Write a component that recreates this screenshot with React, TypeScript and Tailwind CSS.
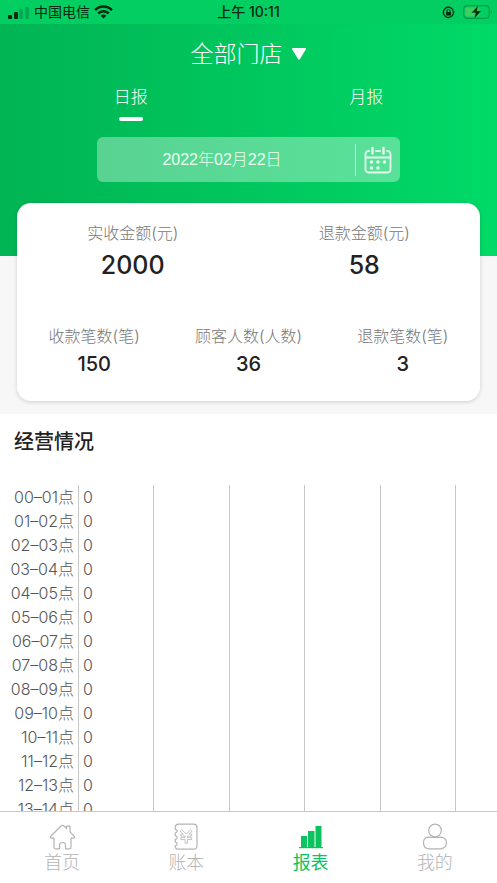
import type { ReactNode } from "react";

const hours = Array.from({ length: 14 }, (_, h) => {
  const pad = (n: number) => String(n).padStart(2, "0");
  return { label: `${pad(h)}–${pad(h + 1)}点`, value: 0 };
});

function StatusBar() {
  return (
    <div className="grid h-6 grid-cols-3 items-center bg-[#03ce62] px-2 text-sm text-[#04290f]">
      <div className="flex items-center gap-1">
        <svg width="22" height="13" viewBox="0 0 22 13" aria-hidden="true">
          <rect x="0" y="9" width="4" height="4" rx="1" fill="#04290f" />
          <rect x="6" y="6" width="4" height="7" rx="1" fill="#04290f" />
          <rect x="11" y="3" width="4" height="10" rx="1" fill="#03ab52" />
          <rect x="17" y="1" width="4" height="12" rx="1" fill="#03ab52" />
        </svg>
        <span className="whitespace-nowrap">中国电信</span>
        <svg width="19" height="14" viewBox="0 0 19 14" fill="none" stroke="#04290f" strokeWidth="2.5" aria-hidden="true">
          <path d="M1 5.2C5.8.4 13.2.4 18 5.2" />
          <path d="M4.2 8.4c3-3 7.6-3 10.6 0" />
          <path d="M9.5 13.4 6.7 10.7c1.6-1.5 4-1.5 5.6 0z" fill="#04290f" stroke="none" />
        </svg>
      </div>
      <span className="text-center font-medium">上午 10:11</span>
      <div className="flex items-center justify-end gap-1">
        <svg width="13" height="13" viewBox="0 0 13 13" fill="none" stroke="#04290f" aria-hidden="true">
          <path d="M11.4 7.4A5.1 5.1 0 1 1 11.2 4.6" strokeWidth="1.3" />
          <path d="M10 5.6h3l-1.5 2.2z" fill="#04290f" stroke="none" />
          <rect x="4" y="6" width="5" height="3.5" rx=".5" fill="#04290f" stroke="none" />
          <path d="M5 6V4.9a1.5 1.5 0 0 1 3 0V6" />
        </svg>
        <svg className="-mr-1 ml-1" width="30" height="14" viewBox="0 0 30 14" aria-hidden="true">
          <rect x=".7" y=".7" width="25.6" height="12.6" rx="3.5" fill="none" stroke="#049a4b" strokeWidth="1.2" />
          <rect x="2.4" y="2.4" width="14" height="9.2" rx="2" fill="#3fcf60" />
          <path d="M28 5v4c1.4-.6 1.4-3.4 0-4z" fill="#049a4b" />
          <path d="M15.5 0 8.5 7.8h4.2L11 14l7.2-8h-4.4z" fill="#04290f" stroke="#03ce62" strokeWidth=".4" />
        </svg>
      </div>
    </div>
  );
}

function CalendarIcon() {
  return (
    <svg width="28" height="28" viewBox="0 0 28 28" fill="none" stroke="#e4faed" strokeWidth="1.8" strokeLinecap="round" aria-hidden="true">
      <path d="M5 5H4.500a3 3 0 0 0-3 3v15.500a3 3 0 0 0 3 3h19a3 3 0 0 0 3-3V8a3 3 0 0 0-3-3H23M12 5h4M1.500 11.500h25" />
      <path d="M8.500 2v5.500M19.500 2v5.500" strokeWidth="2.400" />
      <g fill="#e4faed" stroke="none">
        <circle cx="7.500" cy="16" r="1.800" />
        <circle cx="14" cy="16" r="1.800" />
        <circle cx="20.500" cy="16" r="1.800" />
        <circle cx="7.500" cy="22" r="1.800" />
        <circle cx="14" cy="22" r="1.800" />
      </g>
    </svg>
  );
}

function Stat({ label, value, large = false }: { label: string; value: string; large?: boolean }) {
  return (
    <div className="flex flex-col items-center">
      <dt className="text-base leading-6 font-light whitespace-nowrap text-[#777]">{label}</dt>
      <dd className={large ? "mt-1 text-[25px] leading-8 font-medium text-[#222]" : "mt-1 text-xl leading-6 font-medium text-[#222]"}>
        {value}
      </dd>
    </div>
  );
}

function NavItem({ label, active = false, children }: { label: string; active?: boolean; children: ReactNode }) {
  return (
    <a
      href="#"
      aria-current={active ? "page" : undefined}
      className={`flex flex-col items-center text-lg leading-6 ${active ? "text-[#0bc45d]" : "font-light text-[#b4b4b4]"}`}
    >
      <svg width="28" height="28" viewBox="0 0 28 28" fill="none" stroke="currentColor" strokeWidth="1.200" strokeLinejoin="round" strokeLinecap="round" aria-hidden="true">
        {children}
      </svg>
      {label}
    </a>
  );
}

export default function App() {
  return (
    <div className="flex h-dvh flex-col overflow-hidden bg-white font-['Inter','Noto_Sans_CJK_SC',sans-serif]">
      <StatusBar />
      <main className="min-h-0 flex-1 overflow-hidden">
        <header className="bg-linear-to-r from-[#00b454] to-[#00da67] pt-3 pb-[74px] text-white">
          <button type="button" className="mx-auto flex h-9 items-center gap-2 text-[23px] font-light">
            全部门店
            <svg width="16" height="14" viewBox="0 0 16 14" fill="currentColor" aria-hidden="true">
              <path d="M2 1h12q1.500 0 .8 1.400L9 12q-1 1.400-2 0L1.200 2.400Q.5 1 2 1z" />
            </svg>
          </button>
          <div role="tablist" className="mt-[13px] grid grid-cols-2 px-[13px] text-[17px] leading-6 font-light">
            <button type="button" role="tab" aria-selected="true" className="flex flex-col items-center">
              日报
              <span className="mt-2 h-1 w-6 rounded-full bg-white" />
            </button>
            <button type="button" role="tab" aria-selected="false" className="flex flex-col items-center">
              月报
            </button>
          </div>
          <button type="button" aria-label="选择日期" className="mx-auto mt-4 flex h-[45px] w-[61%] items-center rounded-md bg-white/35 pr-2 text-base font-light text-[#ecfcf2]">
            <span className="flex-1 pr-2 text-center font-['Liberation_Sans','Noto_Sans_CJK_SC',sans-serif]">2022年02月22日</span>
            <span className="flex h-8 items-center border-l border-[#d3f6e1] pl-2">
              <CalendarIcon />
            </span>
          </button>
        </header>

        <section className="flow-root bg-[#f7f7f7] px-[17px] pb-[13px]">
          <div className="relative -mt-[53px] rounded-[14px] bg-white pt-[18px] pb-[25px] shadow-[0_1px_4px_rgba(0,0,0,0.16)]">
            <dl className="grid grid-cols-2">
              <Stat label="实收金额(元)" value="2000" large />
              <Stat label="退款金额(元)" value="58" large />
            </dl>
            <dl className="mt-[43px] grid grid-cols-3">
              <Stat label="收款笔数(笔)" value="150" />
              <Stat label="顾客人数(人数)" value="36" />
              <Stat label="退款笔数(笔)" value="3" />
            </dl>
          </div>
        </section>

        <section>
          <h2 className="px-[14px] pt-3 text-xl leading-8 font-medium text-[#222]">经营情况</h2>
          <div className="mt-[27px] flex text-base leading-6 font-light text-[#555]">
            <ul className="w-[78px] pr-1 text-right whitespace-nowrap">
              {hours.map((h) => (
                <li key={h.label}>{h.label}</li>
              ))}
            </ul>
            <div className="grid flex-1 grid-cols-[repeat(5,9fr)_5fr]">
              <ul className="border-l border-[#c8c8c8] pl-1">
                {hours.map((h) => (
                  <li key={h.label}>{h.value}</li>
                ))}
              </ul>
              <div className="border-l border-[#c8c8c8]" />
              <div className="border-l border-[#c8c8c8]" />
              <div className="border-l border-[#c8c8c8]" />
              <div className="border-l border-[#c8c8c8]" />
              <div className="border-l border-[#c8c8c8]" />
            </div>
          </div>
        </section>
      </main>

      <nav className="grid h-[72px] grid-cols-4 border-t border-[#c8c8c8] bg-white pt-[11px]">
        <NavItem label="首页">
          <path d="M2.500 13.500 13 3q1.500-1.200 3 0l2.500 2.500V3.200h3.500v5.600l4.500 4.700q.6 1.700-1 1.700h-2.500V24q0 1.800-1.800 1.800h-3.700v-4q0-2.300-3-2.300t-3 2.300v4H7.800Q6 25.800 6 24v-8.800H3.500q-1.900 0-1-1.700z" />
        </NavItem>
        <NavItem label="账本">
          <path d="M6.500 1.200h15q3.500 0 3.500 3.500v18q0 3.500-3.500 3.500H6q-2.800 0-2.800-3.400 2-.6 2-2t-2-1.900v-2.500q2-.5 2-1.900t-2-1.900V10q2-.5 2-1.900t-2-1.800V4.500q0-3.300 3.300-3.300z" />
          <path d="m8.500 8.300 2.800 2.900H8.800v1.900h4.300v1.600H8.800v1.900h4.300v3.600h2.300v-3.600h4.300v-1.900h-4.300v-1.600h4.300v-1.900h-2.500L20 8.300l-1.500-1.400-4.200 4.100L10 6.900z" strokeWidth=".8" />
        </NavItem>
        <NavItem label="报表" active>
          <g fill="currentColor" stroke="none">
            <rect x="4" y="13" width="6" height="12" />
            <rect x="11" y="8" width="6.500" height="17" />
            <rect x="18.500" y="3" width="6" height="22" />
            <rect x="2" y="24" width="24" height="1.200" />
          </g>
        </NavItem>
        <NavItem label="我的">
          <circle cx="14" cy="7.500" r="6.300" />
          <path d="M8 14.200q6 .6 12 0 5.500.8 5.500 5.600t-5.500 6H8q-5.500-.2-5.500-6T8 14.200z" />
        </NavItem>
      </nav>
    </div>
  );
}
